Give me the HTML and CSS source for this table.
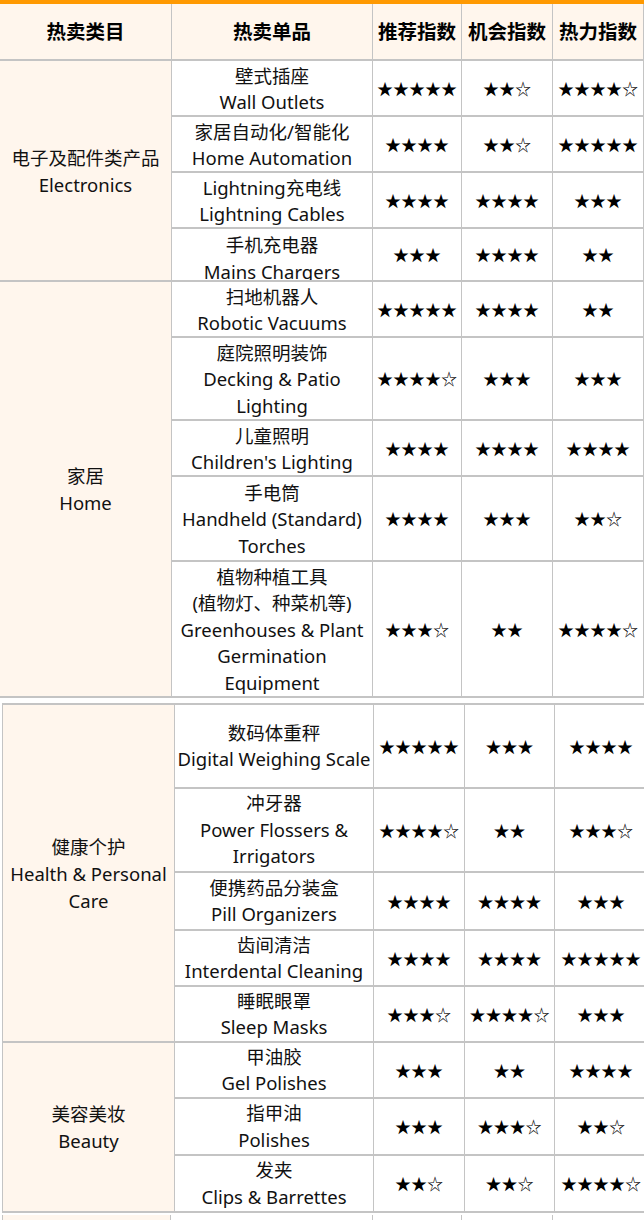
FILE: index.html
```html
<!DOCTYPE html>
<html lang="zh">
<head>
<meta charset="utf-8">
<title>热卖类目</title>
<link rel="stylesheet" href="styles.css">
</head>
<body>
<div class="sheet">
  <div class="grid g1">
    <div class="cell head">热卖类目</div>
    <div class="cell head">热卖单品</div>
    <div class="cell head">推荐指数</div>
    <div class="cell head">机会指数</div>
    <div class="cell head">热力指数</div>

    <div class="cell cat span4"><span>电子及配件类产品</span><span>Electronics</span></div>
    <div class="cell item"><span>壁式插座</span><span>Wall Outlets</span></div>
    <div class="cell star">★★★★★</div><div class="cell star">★★☆</div><div class="cell star">★★★★☆</div>
    <div class="cell item"><span>家居自动化/智能化</span><span>Home Automation</span></div>
    <div class="cell star">★★★★</div><div class="cell star">★★☆</div><div class="cell star">★★★★★</div>
    <div class="cell item"><span>Lightning充电线</span><span>Lightning Cables</span></div>
    <div class="cell star">★★★★</div><div class="cell star">★★★★</div><div class="cell star">★★★</div>
    <div class="cell item clip"><span>手机充电器</span><span>Mains Chargers</span></div>
    <div class="cell star">★★★</div><div class="cell star">★★★★</div><div class="cell star">★★</div>

    <div class="cell cat span5"><span>家居</span><span>Home</span></div>
    <div class="cell item"><span>扫地机器人</span><span>Robotic Vacuums</span></div>
    <div class="cell star">★★★★★</div><div class="cell star">★★★★</div><div class="cell star">★★</div>
    <div class="cell item"><span>庭院照明装饰</span><span>Decking &amp; Patio</span><span>Lighting</span></div>
    <div class="cell star">★★★★☆</div><div class="cell star">★★★</div><div class="cell star">★★★</div>
    <div class="cell item"><span>儿童照明</span><span>Children's Lighting</span></div>
    <div class="cell star">★★★★</div><div class="cell star">★★★★</div><div class="cell star">★★★★</div>
    <div class="cell item"><span>手电筒</span><span>Handheld (Standard)</span><span>Torches</span></div>
    <div class="cell star">★★★★</div><div class="cell star">★★★</div><div class="cell star">★★☆</div>
    <div class="cell item"><span>植物种植工具</span><span>(植物灯、种菜机等)</span><span>Greenhouses &amp; Plant</span><span>Germination</span><span>Equipment</span></div>
    <div class="cell star">★★★☆</div><div class="cell star">★★</div><div class="cell star">★★★★☆</div>
  </div>

  <div class="grid g2">
    <div class="cell cat span5"><span>健康个护</span><span>Health &amp; Personal</span><span>Care</span></div>
    <div class="cell item"><span>数码体重秤</span><span>Digital Weighing Scale</span></div>
    <div class="cell star">★★★★★</div><div class="cell star">★★★</div><div class="cell star">★★★★</div>
    <div class="cell item"><span>冲牙器</span><span>Power Flossers &amp;</span><span>Irrigators</span></div>
    <div class="cell star">★★★★☆</div><div class="cell star">★★</div><div class="cell star">★★★☆</div>
    <div class="cell item"><span>便携药品分装盒</span><span>Pill Organizers</span></div>
    <div class="cell star">★★★★</div><div class="cell star">★★★★</div><div class="cell star">★★★</div>
    <div class="cell item"><span>齿间清洁</span><span>Interdental Cleaning</span></div>
    <div class="cell star">★★★★</div><div class="cell star">★★★★</div><div class="cell star">★★★★★</div>
    <div class="cell item"><span>睡眠眼罩</span><span>Sleep Masks</span></div>
    <div class="cell star">★★★☆</div><div class="cell star">★★★★☆</div><div class="cell star">★★★</div>

    <div class="cell cat span3"><span>美容美妆</span><span>Beauty</span></div>
    <div class="cell item"><span>甲油胶</span><span>Gel Polishes</span></div>
    <div class="cell star">★★★</div><div class="cell star">★★</div><div class="cell star">★★★★</div>
    <div class="cell item"><span>指甲油</span><span>Polishes</span></div>
    <div class="cell star">★★★</div><div class="cell star">★★★☆</div><div class="cell star">★★☆</div>
    <div class="cell item"><span>发夹</span><span>Clips &amp; Barrettes</span></div>
    <div class="cell star">★★☆</div><div class="cell star">★★☆</div><div class="cell star">★★★★☆</div>
  </div>

  <div class="grid g3">
    <div class="cell cat"></div>
    <div class="cell"></div>
    <div class="cell"></div>
    <div class="cell"></div>
    <div class="cell"></div>
  </div>
</div>
</body>
</html>
```

FILE: styles.css
```css
html, body {
  margin: 0;
  padding: 0;
  background: #ffffff;
}
body {
  width: 644px;
  height: 1220px;
  overflow: hidden;
  font-family: "Noto Sans", "Noto Sans CJK SC", sans-serif;
  font-size: 18.5px;
  color: #111111;
}
.sheet {
  display: flex;
  flex-direction: column;
  width: 644px;
  height: 1220px;
  overflow: hidden;
}
.grid {
  display: grid;
  background: #c4c4c4;
  row-gap: 2px;
  column-gap: 1px;
  flex: none;
}
.g1 {
  width: 644px;
  border-top: 4px solid #ff9900;
  padding: 0 1px 2px 0;
  box-sizing: border-box;
  grid-template-columns: 171px 200px 88px 90px 90px;
  grid-template-rows: 55px 54px 54px 54px 51px 54px 81px 54px 83px 134px;
}
.g2 {
  width: 646px;
  margin-top: 5px;
  margin-left: 2px;
  padding: 2px 0 2px 1px;
  box-sizing: border-box;
  grid-template-columns: 171px 198px 90px 89px 92px;
  grid-template-rows: 82px 82px 56px 54px 54px 54px 55px 55px;
}
.g3 {
  width: 646px;
  margin-top: 2px;
  margin-left: 2px;
  padding: 0 0 0 1px;
  box-sizing: border-box;
  grid-template-columns: 167px 201px 88px 90px 92px;
  grid-template-rows: 40px;
}
.cell {
  background: #ffffff;
  display: flex;
  flex-direction: column;
  align-items: center;
  justify-content: center;
  text-align: center;
  overflow: hidden;
  line-height: 27px;
  white-space: nowrap;
}
.cell span {
  display: block;
}
.head {
  background: #fff6ed;
  font-weight: bold;
  font-size: 19.5px;
  color: #000000;
}
.cat {
  background: #fff6ed;
}
.item {
  line-height: 26.5px;
}
.g1 .item {
  padding-top: 2px;
}
.g1 .clip {
  justify-content: flex-start;
  padding-top: 3px;
}
.star {
  font-family: "Noto Sans CJK SC", sans-serif;
  font-size: 16px;
  color: #000000;
}
.span3 { grid-row: span 3; }
.span4 { grid-row: span 4; }
.span5 { grid-row: span 5; }
```
